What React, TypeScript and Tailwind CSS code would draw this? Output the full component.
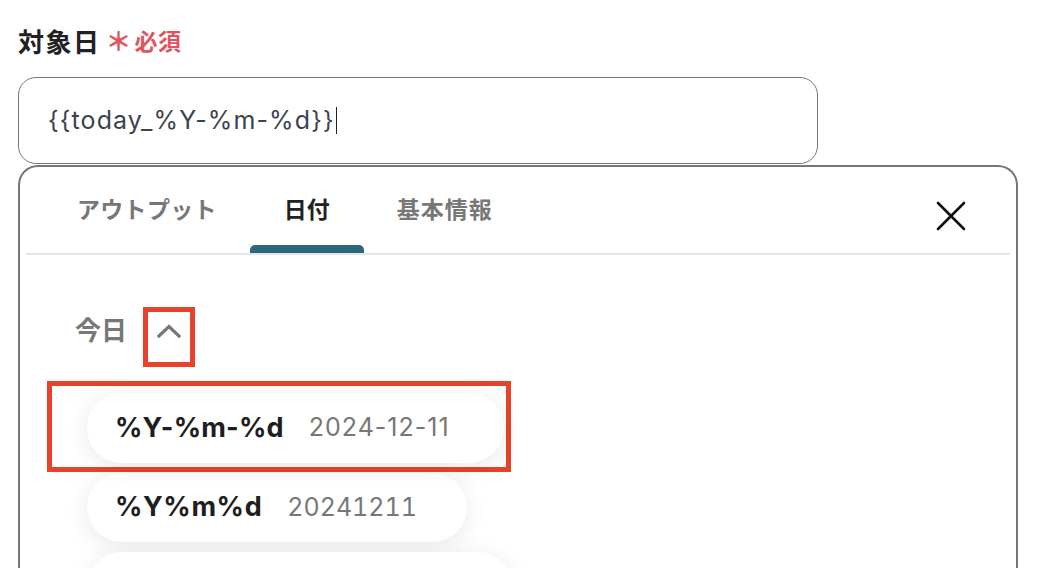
import React from "react";

const jp = { fontFamily: "Inter, 'Noto Sans CJK JP', sans-serif" };

function Chevron() {
  return (
    <svg width="24" height="14" viewBox="0 0 24 14" fill="none">
      <path d="M2 12 L12 2.5 L22 12" stroke="#777" strokeWidth="3.2" strokeLinecap="square" />
    </svg>
  );
}

function CloseX() {
  return (
    <svg width="30" height="30" viewBox="0 0 30 30" fill="none">
      <path d="M2 2 L28 28 M28 2 L2 28" stroke="#111" strokeWidth="2.6" strokeLinecap="round" />
    </svg>
  );
}

export default function App() {
  return (
    <div className="min-h-[568px] bg-white overflow-hidden pl-[18px] pt-[25px]" style={jp}>
      <div className="flex items-center h-[34px]">
        <span className="text-[26px] font-bold text-[#222] tracking-[1.5px]">対象日</span>
        <span className="ml-[5px] text-[26px] font-bold text-[#e2545d] leading-none">＊</span>
        <span className="ml-[3px] text-[23px] font-bold text-[#e2545d] tracking-[0.5px]">必須</span>
      </div>

      <div className="mt-[18px] w-[800px] h-[87px] border-[1.5px] border-[#777] rounded-[18px] flex items-center pl-[29px]">
        <span className="text-[25px] text-[#3c4350] tracking-[1.1px]">{"{{today_%Y-%m-%d}}"}</span>
        <span className="ml-[1px] w-[1.5px] h-[27px] bg-[#222]" />
      </div>

      <div className="mt-[1px] w-[1000px] h-[420px] border-2 border-b-0 border-[#777] rounded-t-[20px] px-[6px]">
        <div className="flex items-end h-[88px] border-b-2 border-[#e5e5e5] relative">
          <div className="flex pl-[18px]">
            <div className="px-[33px] h-[86px] flex items-center">
              <span className="text-[23px] font-bold text-[#777] tracking-[0.3px]">アウトプット</span>
            </div>
            <div className="relative px-[34px] h-[86px] flex items-center">
              <span className="text-[23px] font-bold text-[#222]">日付</span>
              <span className="absolute left-0 right-0 bottom-0 h-[8px] bg-[#2e6680] rounded-t-[5px]" />
            </div>
            <div className="px-[33px] h-[86px] flex items-center">
              <span className="text-[23px] font-bold text-[#777] tracking-[1px]">基本情報</span>
            </div>
          </div>
          <button className="ml-auto mr-[44px] mb-[20px] self-center mt-[32px]">
            <CloseX />
          </button>
        </div>

        <div className="pl-[49px] pt-[52px] flex items-start">
          <span className="text-[26px] font-bold text-[#777] mt-[4px]">今日</span>
          <button className="ml-[16px] w-[52px] h-[60px] border-[5px] border-[#e8432a] flex items-start justify-center pt-[12px]">
            <Chevron />
          </button>
        </div>

        <div className="pl-[61px] pt-[26px] flex flex-col items-start gap-[10px]">
          <div className="relative">
            <span className="absolute -left-[40px] -top-[12px] -right-[7px] -bottom-[9px] border-[5px] border-[#e8432a]" />
            <div className="relative h-[70px] rounded-full bg-white shadow-[0_4px_24px_rgba(0,0,0,0.09)] flex items-center pl-[28px] pr-[54px]">
              <span className="text-[27px] font-bold text-[#1e1e1e] tracking-[0.2px]">%Y-%m-%d</span>
              <span className="ml-[25px] text-[25px] text-[#777] tracking-[1px]">2024-12-11</span>
            </div>
          </div>
          <div className="h-[69px] rounded-full bg-white shadow-[0_4px_24px_rgba(0,0,0,0.09)] flex items-center pl-[28px] pr-[50px]">
            <span className="text-[27px] font-bold text-[#1e1e1e] tracking-[0.6px]">%Y%m%d</span>
            <span className="ml-[25px] text-[25px] text-[#777] tabular-nums">20241211</span>
          </div>
          <div className="h-[69px] w-[426px] rounded-full bg-white shadow-[0_4px_24px_rgba(0,0,0,0.09)]" />
        </div>
      </div>
    </div>
  );
}
